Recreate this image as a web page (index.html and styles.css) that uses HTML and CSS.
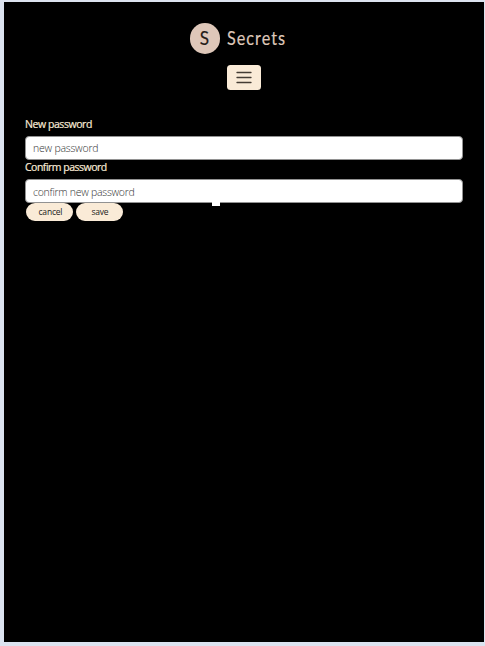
FILE: index.html
```html
<!DOCTYPE html>
<html lang="en">
<head>
<meta charset="utf-8">
<title>Secrets</title>
<link rel="stylesheet" href="styles.css">
</head>
<body>
<div class="page">
  <header class="header">
    <div class="brand"><span class="badge"><span class="initial">S</span></span><span class="name">Secrets</span></div>
    <button class="menu" aria-label="Menu">
      <svg width="16" height="13" viewBox="0 0 16 13"><path d="M1 1.5h14M1 6.5h14M1 11.5h14" stroke="#443d34" stroke-width="1.3" stroke-linecap="round"/></svg>
    </button>
  </header>
  <form class="form">
    <label class="label" for="new"><span class="l1">New password</span></label>
    <div class="field"><input class="input i1" id="new" placeholder="new password"></div>
    <label class="label" for="confirm"><span class="l2">Confirm password</span></label>
    <div class="field"><input class="input i2" id="confirm" placeholder="confirm new password"><span class="marker"></span></div>
    <div class="actions"><button type="button" class="btn">cancel</button><button type="button" class="btn">save</button></div>
  </form>
</div>
</body>
</html>
```
FILE: styles.css
```css
* { box-sizing: border-box; }
body { margin: 0; height: 646px; padding: 2px 1px 4px 4px; background: #dce3ef; overflow: hidden; font-family: "Open Sans", sans-serif; }
.page { height: 640px; background: #000; padding: 21px 21px 0; }
.header { display: flex; flex-direction: column; align-items: center; }
.brand { display: flex; align-items: center; gap: 7px; height: 31px; width: 97px; align-self: flex-start; margin-left: 164.5px; }
.badge { flex: none; width: 30.5px; height: 30.5px; border-radius: 50%; background: #dec7b9; display: flex; align-items: center; justify-content: center; color: #241c18; }
.initial { font: 19.5px/31px Lato, sans-serif; padding-bottom: 2px; transform: scaleX(.88); -webkit-text-stroke: .2px #241c18; }
.name { font: 19.5px/30px Lato, sans-serif; padding-bottom: 2px; color: #dec7b9; letter-spacing: 1.25px; white-space: nowrap; transform: scaleX(.83); transform-origin: left; -webkit-text-stroke: .2px #dec7b9; }
.menu { display: flex; align-items: center; justify-content: center; width: 34.5px; height: 25px; margin: 11px 0 0; padding: 0; border: 0; border-radius: 3.5px; background: #faebd7; }
.form { padding-top: 27px; }
.label { display: block; height: 19px; font-size: 10.5px; line-height: 14px; color: #faebd7; white-space: nowrap; }
.l1, .l2 { -webkit-text-stroke: .2px #faebd7; }
.l1 { letter-spacing: -.43px; }
.l2 { letter-spacing: -.5px; }
.field { position: relative; height: 24px; }
.input { display: block; width: 438px; height: 24px; padding: 0 7px; border: 1px solid #929292; border-radius: 4px; background: #fff; font: 300 10.5px/22px "Open Sans", sans-serif; color: #444; }
.i1 { letter-spacing: -.22px; }
.i2 { letter-spacing: -.27px; padding-top: 2px; }
.input::placeholder { color: #333; opacity: 1; }
.marker { position: absolute; left: 187px; top: 22px; width: 8px; height: 5px; background: #fff; }
.actions { display: flex; gap: 2.5px; padding-left: 1.4px; }
.btn { width: 47px; height: 18px; padding: 0 0 0 1px; border: 0; border-radius: 9px; background: #faebd7; font: 8.5px/16px "Open Sans", sans-serif; letter-spacing: -.2px; color: #222; }
```
